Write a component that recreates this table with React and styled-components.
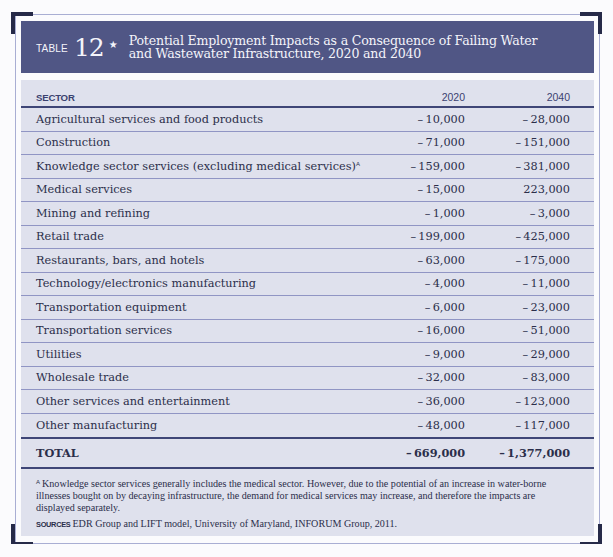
import React from "react";
import styled, { createGlobalStyle } from "styled-components";

const GlobalStyle = createGlobalStyle`
  body {
    margin: 0;
    background: #fbfbfd;
  }
`;

const Frame = styled.div`
  position: relative;
  box-sizing: border-box;
  width: 585px;
  height: 530px;
  margin: 14px 0 0 15px;
  padding: 6px 5px 7px 5px;
  border: 1px solid #a9aed3;
  display: flex;
  flex-direction: column;
  gap: 7px;
`;

const Corner = styled.span`
  position: absolute;
  width: 18px;
  height: 18px;
  border-color: #262a48;
  border-style: solid;
  border-width: 0;
  ${(p) => (p.$v === "top" ? "top: -3px; border-top-width: 4px;" : "bottom: -3px; border-bottom-width: 4px;")}
  ${(p) => (p.$h === "left" ? "left: -5px; border-left-width: 4px;" : "right: -3px; border-right-width: 4px;")}
`;

const TitleBar = styled.div`
  height: 52px;
  flex-shrink: 0;
  background: #505685;
  display: flex;
  align-items: center;
  padding-left: 15px;
  color: #f4f4fa;
`;

const TableLabel = styled.span`
  font-family: "Liberation Sans", Arial, sans-serif;
  font-size: 10px;
  letter-spacing: 0.2px;
  margin-top: 2px;
`;

const TableNum = styled.span`
  font-family: "DejaVu Serif", serif;
  font-size: 25px;
  margin-left: 6px;
  letter-spacing: -1px;
`;

const Star = styled.span`
  font-family: "DejaVu Sans", sans-serif;
  font-size: 10px;
  margin-left: 5px;
  margin-top: -6px;
`;

const Title = styled.h1`
  margin: 0 0 0 11px;
  font-family: "DejaVu Serif", serif;
  font-weight: normal;
  font-size: 12.6px;
  line-height: 13.5px;
  letter-spacing: -0.2px;
  white-space: nowrap;
`;

const Panel = styled.div`
  flex: 1;
  background: #dfe1ed;
  color: #2b2e4a;
  display: flex;
  flex-direction: column;
`;

const Row = styled.div`
  display: grid;
  grid-template-columns: 1fr 105px 105px;
  align-items: center;
  padding: 0 24px 0 15px;
  height: ${(p) => p.$h}px;
  border-bottom: ${(p) => (p.$heavy ? "2px solid #3f4677" : "1px solid #9095c4")};
  font-family: "DejaVu Serif", serif;
  font-size: 11.3px;
  white-space: nowrap;
  font-weight: ${(p) => (p.$bold ? "bold" : "normal")};
`;

const HeadCell = styled.span`
  font-family: "Liberation Sans", Arial, sans-serif;
  color: #3b4270;
  padding-top: 8px;
  text-align: ${(p) => (p.$num ? "right" : "left")};
  font-size: ${(p) => (p.$num ? "10.5px" : "9.6px")};
  font-weight: ${(p) => (p.$num ? "normal" : "bold")};
  letter-spacing: ${(p) => (p.$num ? "0" : "-0.2px")};
`;

const Num = styled.span`
  text-align: right;
`;

const Sup = styled.span`
  display: inline-block;
  font-family: "Liberation Sans", Arial, sans-serif;
  font-size: 6px;
  line-height: 6px;
  vertical-align: top;
  margin: 1px ${(p) => (p.$lead ? "2px" : "0")} 0 0;
`;

const Notes = styled.div`
  padding: 9px 24px 0 15px;
  font-family: "Liberation Serif", "Times New Roman", serif;
  font-size: 10.1px;
  line-height: 12px;
`;

const Note = styled.p`
  margin: 0 0 ${(p) => p.$gap || 0}px;
`;

const SourceTag = styled.span`
  font-family: "Liberation Sans", Arial, sans-serif;
  font-weight: bold;
  font-size: 7.4px;
  letter-spacing: -0.3px;
  margin-right: 2px;
`;

const neg = (v) => "\u2013\u2009" + v;

const rows = [
  ["Agricultural services and food products", neg("10,000"), neg("28,000")],
  ["Construction", neg("71,000"), neg("151,000")],
  ["Knowledge sector services (excluding medical services)", neg("159,000"), neg("381,000"), true],
  ["Medical services", neg("15,000"), "223,000"],
  ["Mining and refining", neg("1,000"), neg("3,000")],
  ["Retail trade", neg("199,000"), neg("425,000")],
  ["Restaurants, bars, and hotels", neg("63,000"), neg("175,000")],
  ["Technology/electronics manufacturing", neg("4,000"), neg("11,000")],
  ["Transportation equipment", neg("6,000"), neg("23,000")],
  ["Transportation services", neg("16,000"), neg("51,000")],
  ["Utilities", neg("9,000"), neg("29,000")],
  ["Wholesale trade", neg("32,000"), neg("83,000")],
  ["Other services and entertainment", neg("36,000"), neg("123,000")],
  ["Other manufacturing", neg("48,000"), neg("117,000")],
];

export default function App() {
  return (
    <>
      <GlobalStyle />
      <Frame>
        <Corner $v="top" $h="left" />
        <Corner $v="top" $h="right" />
        <Corner $v="bottom" $h="left" />
        <Corner $v="bottom" $h="right" />
        <TitleBar>
          <TableLabel>TABLE</TableLabel>
          <TableNum>12</TableNum>
          <Star>★</Star>
          <Title>
            Potential Employment Impacts as a Consequence of Failing Water
            <br />
            and Wastewater Infrastructure, 2020 and 2040
          </Title>
        </TitleBar>
        <Panel>
          <Row $h={26} $heavy>
            <HeadCell>SECTOR</HeadCell>
            <HeadCell $num>2020</HeadCell>
            <HeadCell $num>2040</HeadCell>
          </Row>
          {rows.map(([name, a, b, note], i) => (
            <Row key={name} $h={i === rows.length - 1 ? 23.5 : 22.5} $heavy={i === rows.length - 1}>
              <span>
                {name}
                {note && <Sup>A</Sup>}
              </span>
              <Num>{a}</Num>
              <Num>{b}</Num>
            </Row>
          ))}
          <Row $h={28} $heavy $bold>
            <span>TOTAL</span>
            <Num>{neg("669,000")}</Num>
            <Num>{neg("1,377,000")}</Num>
          </Row>
          <Notes>
            <Note $gap={4}>
              <Sup $lead>A</Sup>Knowledge sector services generally includes the medical sector. However, due to the
              potential of an increase in water-borne illnesses bought on by decaying infrastructure, the demand
              for medical services may increase, and therefore the impacts are displayed separately.
            </Note>
            <Note>
              <SourceTag>SOURCES</SourceTag>EDR Group and LIFT model, University of Maryland, INFORUM Group, 2011.
            </Note>
          </Notes>
        </Panel>
      </Frame>
    </>
  );
}
